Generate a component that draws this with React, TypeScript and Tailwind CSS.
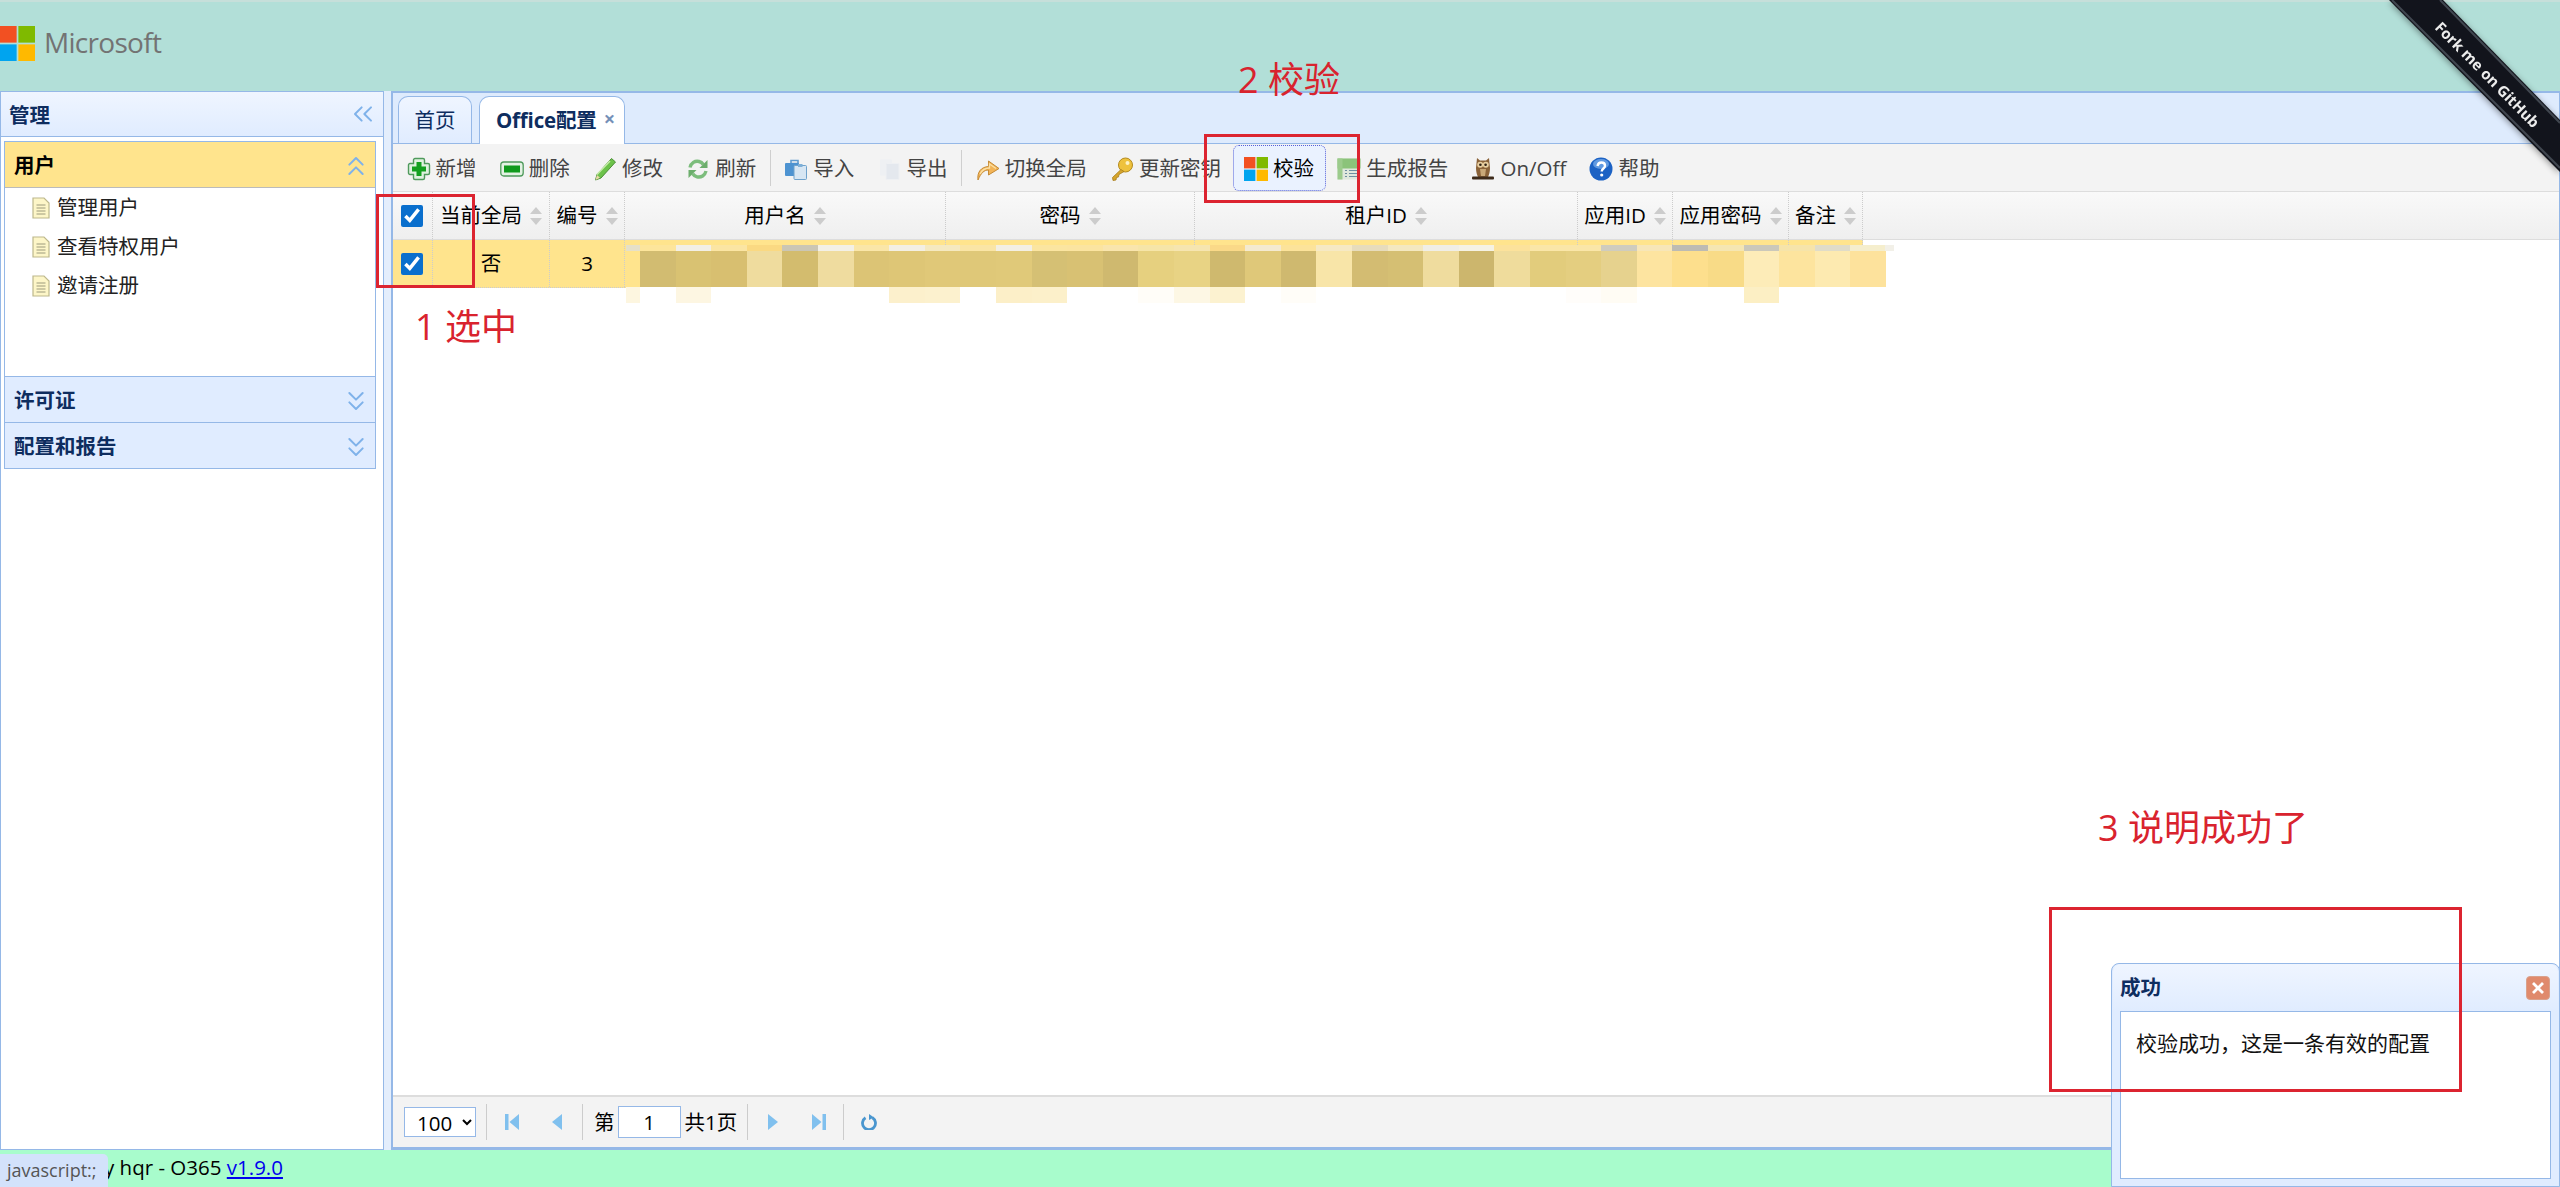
import { ChevronsDown, ChevronsLeft, ChevronsUp } from "lucide-react";
import type { ReactNode } from "react";

const NewIcon = () => (
  <svg viewBox="0 0 24 24" className="w-6 h-6">
    <path d="M8 1.500h8a1.500 1.500 0 0 1 1.500 1.500v3.500H21A1.500 1.500 0 0 1 22.500 8v8a1.500 1.500 0 0 1-1.500 1.500h-3.500V21a1.500 1.500 0 0 1-1.500 1.500H8A1.500 1.500 0 0 1 6.500 21v-3.500H3A1.500 1.500 0 0 1 1.500 16V8A1.500 1.500 0 0 1 3 6.500h3.500V3A1.500 1.500 0 0 1 8 1.500z" fill="#dff2df" stroke="#4f9a5c" strokeWidth="1.400" />
    <path d="M9.500 5h5v4.500H19v5h-4.500V19h-5v-4.500H5v-5h4.500z" fill="#13a01f" />
  </svg>
);

const RemoveIcon = () => (
  <svg viewBox="0 0 24 24" className="w-6 h-6">
    <rect x="0.800" y="5" width="22.400" height="14" rx="3" fill="#e3f2e3" stroke="#4f9a5c" strokeWidth="1.300" />
    <rect x="4" y="8.500" width="16" height="7" fill="#0f9a1c" />
  </svg>
);

const EditIcon = () => (
  <svg viewBox="0 0 24 24" className="w-6 h-6">
    <path d="M18.500 1.500l4 3.500L8 21l-5.500 2L4 17.500z" fill="#6cc24a" stroke="#4b8f37" strokeWidth="1" />
    <path d="M4 17.500L17 4" stroke="#c5eba8" strokeWidth="1.500" />
    <path d="M2.500 23L4 18l3 2.800z" fill="#e8d8a8" />
  </svg>
);

const RefreshIcon = () => (
  <svg viewBox="0 0 24 24" className="w-6 h-6" fill="none">
    <path d="M4 10.500C5 6 9 3.500 13 4.500c2 .5 3.300 1.500 4.300 3" stroke="#7cbd7c" strokeWidth="3.400" />
    <path d="M21.500 3v8h-8z" fill="#6cae6c" />
    <path d="M20 14c-1 4.500-5 6.800-9 5.800-2-.5-3.300-1.500-4.300-3" stroke="#7cbd7c" strokeWidth="3.400" />
    <path d="M2.500 21v-8h8z" fill="#6cae6c" />
  </svg>
);

const ImportIcon = () => (
  <svg viewBox="0 0 24 24" className="w-6 h-6">
    <path d="M7 3.500h7v3H7z" fill="none" stroke="#5f9bd0" strokeWidth="1.600" />
    <rect x="1" y="6" width="14" height="13" rx="1" fill="#4d93d1" />
    <rect x="10" y="8.500" width="12.500" height="14" rx="1" fill="#d7e6f3" stroke="#6fa2cc" />
    <rect x="14" y="7" width="4.500" height="3" fill="#7fb0d8" />
  </svg>
);

const ExportIcon = () => (
  <svg viewBox="0 0 24 24" className="w-6 h-6">
    <rect x="2" y="2.500" width="12" height="16" rx="1" fill="#eef0f3" />
    <rect x="8" y="6.500" width="13" height="16" rx="1" fill="#e4e8ee" stroke="#eef0f3" />
  </svg>
);

const SwitchIcon = () => (
  <svg viewBox="0 0 24 24" className="w-6 h-6">
    <path d="M2 23c-1-8 3-13 10.500-13.500V4L23 11.500 12.500 18v-5C8 13 5 16 2 23z" fill="#f3b457" stroke="#c48a35" strokeWidth="1" />
    <path d="M4 17c2-4 5-6 9.500-6V7l6.500 4.500" fill="none" stroke="#fbe0a4" strokeWidth="1.300" />
  </svg>
);

const KeyIcon = () => (
  <svg viewBox="0 0 24 24" className="w-6 h-6">
    <circle cx="15.500" cy="8" r="7" fill="#eec23d" stroke="#b48a1e" />
    <circle cx="17.500" cy="6" r="2" fill="#fdf3c4" />
    <path d="M11 12.500L2.500 20.500l.5 3 3-.5.500-2.500 2-.5.500-2.500 5-3z" fill="#d6a52c" stroke="#a87e1c" strokeWidth="0.800" />
  </svg>
);

const MsIcon = ({ size = "w-6 h-6" }: { size?: string }) => (
  <svg viewBox="0 0 24 24" className={size}>
    <rect width="11.400" height="11.400" fill="#f25022" />
    <rect x="12.600" width="11.400" height="11.400" fill="#7fba00" />
    <rect y="12.600" width="11.400" height="11.400" fill="#00a4ef" />
    <rect x="12.600" y="12.600" width="11.400" height="11.400" fill="#ffb900" />
  </svg>
);

const ReportIcon = () => (
  <svg viewBox="0 0 24 24" className="w-6 h-6">
    <rect x="0.500" y="1.500" width="23" height="21" fill="#dfe8dc" />
    <rect x="0.500" y="1.500" width="23" height="10" fill="#8bc37a" />
    <rect x="0.500" y="1.500" width="5" height="21" fill="#9ccb8c" />
    <path d="M8 13.500h2m2 0h9M8 16.500h2m2 0h9M8 19.500h2m2 0h9" stroke="#6d8fa0" strokeWidth="1.200" />
  </svg>
);

const OwlIcon = () => (
  <svg viewBox="0 0 24 24" className="w-6 h-6">
    <path d="M6 1l3 2.500h6L18 1l1 10c0 4-1 7-2 9H7c-1-2-2-5-2-9z" fill="#8a6238" />
    <circle cx="9.200" cy="7.800" r="3" fill="#e8cfa0" />
    <circle cx="14.800" cy="7.800" r="3" fill="#e8cfa0" />
    <circle cx="9.400" cy="7.800" r="1.300" fill="#2e2014" />
    <circle cx="14.600" cy="7.800" r="1.300" fill="#2e2014" />
    <path d="M9 12h6l-1 7h-4z" fill="#c9a878" />
    <rect x="1" y="19.500" width="22" height="3" rx="1" fill="#3d2a1a" />
  </svg>
);

const HelpIcon = () => (
  <svg viewBox="0 0 24 24" className="w-6 h-6">
    <circle cx="12" cy="12" r="11.500" fill="#1c62c4" />
    <ellipse cx="12" cy="7" rx="8" ry="5" fill="#7fb2ee" opacity="0.700" />
    <path d="M8.500 9c.5-2.500 2-3.500 3.800-3.500 2.200 0 3.700 1.300 3.700 3.200 0 2.800-3.300 2.800-3.300 5.800" fill="none" stroke="#fff" strokeWidth="2.400" />
    <circle cx="12.700" cy="18" r="1.600" fill="#fff" />
  </svg>
);

const FileIcon = () => (
  <svg viewBox="0 0 18 22" className="w-[18px] h-[22px] shrink-0">
    <path d="M1 1h11l5 5v15H1z" fill="#fdf6c8" stroke="#bdb88c" strokeWidth="1.200" />
    <path d="M4.500 8h9M4.500 11h9M4.500 14h9M4.500 17h9" stroke="#9c9a7c" strokeWidth="1" />
  </svg>
);

const SortIcon = () => (
  <svg viewBox="0 0 12 18" className="w-3 h-[18px] shrink-0" fill="#cccccc">
    <path d="M6 0l6 7H0z" />
    <path d="M6 18l6-7H0z" />
  </svg>
);

const Sep = () => <span className="w-px h-9 bg-[#cfcfcf] mx-[2px] shrink-0" />;

const PagerSep = () => <span className="w-px h-9 bg-[#cccccc] shrink-0" />;

const Tool = ({ icon, label, active }: { icon: ReactNode; label: string; active?: boolean }) => (
  <button
    className={`flex items-center gap-[5px] pt-[2px] h-[46px] shrink-0 rounded-[6px] text-[#444444] ${
      active ? "bg-[#eaf2ff] border border-dotted border-[#5560d8] text-black px-[10.600px]" : "px-[11.600px]"
    }`}
  >
    {icon}
    {label}
  </button>
);

const columns = [
  { label: "当前全局", width: "w-[117px]", value: "否" },
  { label: "编号", width: "w-[75px]", value: "3" },
  { label: "用户名", width: "w-[321px]", value: "" },
  { label: "密码", width: "w-[249px]", value: "" },
  { label: "租户ID", width: "w-[383px]", value: "" },
  { label: "应用ID", width: "w-[95px]", value: "" },
  { label: "应用密码", width: "w-[116px]", value: "" },
  { label: "备注", width: "w-[74px]", value: "" },
];

// 打码区域的色块: [中间, 上方, 下方], 从左到右
const mosaic: [string, string, string][] = [
  ["#d2bc71", "#fde59b", "#ffffff"],
  ["#d9c272", "#f2efe6", "#fdf6e2"],
  ["#d8bf70", "#fbe5a3", "#ffffff"],
  ["#efdc9e", "#fad982", "#ffffff"],
  ["#d3bc6e", "#cbc6b4", "#ffffff"],
  ["#efdc9f", "#f3f0e6", "#ffffff"],
  ["#dcc475", "#fae6a8", "#ffffff"],
  ["#dec676", "#f3efe3", "#fcf0cc"],
  ["#e0c878", "#f5e9c0", "#fcf1ce"],
  ["#dfc878", "#fae5a5", "#ffffff"],
  ["#e0c979", "#f3efe3", "#fcefc8"],
  ["#d5c074", "#fbe5a0", "#fcf0ca"],
  ["#d8c173", "#fbe4a0", "#ffffff"],
  ["#cfb96f", "#f9e5ad", "#ffffff"],
  ["#e6d07f", "#f6e5a8", "#fffdf8"],
  ["#e8d384", "#f6e5b0", "#fdf7e4"],
  ["#cfb96e", "#fad988", "#fcf2d0"],
  ["#dfc879", "#f4ead0", "#ffffff"],
  ["#cfb96f", "#fce39a", "#fffdf8"],
  ["#f8e5a8", "#f6e9c4", "#ffffff"],
  ["#d3bc72", "#e7dcbc", "#ffffff"],
  ["#d5bf73", "#f4e8c0", "#ffffff"],
  ["#efdc9e", "#f0eee6", "#ffffff"],
  ["#ccb66d", "#f5f2e4", "#ffffff"],
  ["#efdc9c", "#fce29b", "#ffffff"],
  ["#e2cc7c", "#fae6a8", "#ffffff"],
  ["#e4ce80", "#fae6a8", "#fffdfa"],
  ["#e6d28e", "#cfccbe", "#fffcf4"],
  ["#fde4a0", "#f7e6b8", "#ffffff"],
  ["#fddf8d", "#bdbbb3", "#ffffff"],
  ["#f8db87", "#f5e6b2", "#ffffff"],
  ["#fdecb8", "#cbc8ba", "#fcefc4"],
  ["#fde49e", "#f6e4aa", "#ffffff"],
  ["#fdeab0", "#e0dcc8", "#ffffff"],
  ["#fde29c", "#f5eecd", "#ffffff"],
];

const Mosaic = () => (
  <svg viewBox="0 0 1268 58" className="absolute left-[233px] top-[5px] w-[1268px] h-[58px]" shapeRendering="crispEdges">
    <rect x="0" y="0" width="14" height="6" fill="#e6e0c8" />
    <rect x="0" y="42" width="14" height="16" fill="#fdf6e0" />
    {mosaic.map(([main, top, bottom], i) => (
      <g key={i}>
        <rect x={14 + i * 35.6} y="0" width="36" height="6" fill={top} />
        <rect x={14 + i * 35.6} y="6" width="36" height="36" fill={main} />
        <rect x={14 + i * 35.6} y="42" width="36" height="16" fill={bottom} />
      </g>
    ))}
    <rect x="1259" y="0" width="9" height="6" fill="#f2f0e8" />
  </svg>
);

const Annotation = ({ className, children }: { className: string; children: ReactNode }) => (
  <span className={`absolute text-[36px] leading-none text-[#d9232e] whitespace-nowrap ${className}`}>{children}</span>
);

const Ribbon = () => (
  <svg viewBox="0 0 171 172" className="absolute top-0 right-0 w-[171px] h-[172px] drop-shadow-[0_2px_3px_rgba(0,0,0,0.4)]">
    <path d="M0 0h54l117 120v52z" fill="#12141c" />
    <path d="M3 0l168 168M51 0l120 123" stroke="#40464f" strokeWidth="2" fill="none" />
    <text x="98" y="80" textAnchor="middle" transform="rotate(45.500 98 75)" fill="#ececec" fontSize="15" fontWeight="700">
      Fork me on GitHub
    </text>
  </svg>
);

export default function App() {
  return (
    <div className="relative w-[2560px] h-[1187px] overflow-hidden flex flex-col bg-white text-black text-[20.500px] font-['Open_Sans','Noto_Sans_CJK_SC',sans-serif]">
      <header className="h-[91px] shrink-0 bg-[#b2dfd8] border-t-2 border-[#c6dfda] flex items-center gap-[9px] pb-[6px]">
        <div className="w-[35px] h-[35px] overflow-hidden">
          <MsIcon size="w-[35px] h-[35px]" />
        </div>
        <span className="text-[28px] font-medium tracking-[-0.7px] text-[#737373] -mt-[3px]">Microsoft</span>
      </header>

      <div className="flex-1 flex min-h-0 bg-[#e4eefc]">
        <aside className="w-[384px] shrink-0 bg-white border border-[#95b8e7] flex flex-col">
          <div className="h-[45px] shrink-0 pl-2 pt-[3px] flex items-center justify-between bg-linear-to-b from-[#eff5ff] to-[#e0ecff] border-b border-[#95b8e7]">
            <span className="font-bold text-[#0e2d5f]">管理</span>
            <ChevronsLeft className="w-8 h-8 text-[#7fb2ea] mr-[4px] -mt-[4px]" strokeWidth={1.5} />
          </div>
          <div className="mt-1 mx-[3px] w-[372px] border border-[#95b8e7] flex flex-col">
            <div className="h-[46px] pl-[9px] pt-[2px] flex items-center justify-between bg-[#ffe48d] border-b border-[#bbbbbb]">
              <span className="font-bold">用户</span>
              <ChevronsUp className="w-8 h-8 text-[#7fb2ea] mr-[3px]" strokeWidth={1.5} />
            </div>
            <ul className="h-[188px] pl-[27px] flex flex-col bg-white">
              {["管理用户", "查看特权用户", "邀请注册"].map((item) => (
                <li key={item} className="h-[39px] flex items-center gap-[7px] text-[#222222]">
                  <FileIcon />
                  {item}
                </li>
              ))}
            </ul>
            {["许可证", "配置和报告"].map((item) => (
              <div key={item} className="h-[46px] pl-[9px] pt-[2px] flex items-center justify-between bg-[#e0ecff] border-t border-[#95b8e7]">
                <span className="font-bold text-[#0e2d5f]">{item}</span>
                <ChevronsDown className="w-8 h-8 text-[#7fb2ea] mr-[3px]" strokeWidth={1.5} />
              </div>
            ))}
          </div>
        </aside>

        <main className="ml-[7px] flex-1 min-w-0 flex flex-col border-2 border-r border-[#95b8e7] border-t-2 bg-white">
          <div className="h-[51px] shrink-0 pl-[5px] pt-[3px] flex items-end gap-[7px] bg-[#deebfd] border-b border-[#95b8e7]">
            <div className="w-[74px] h-[47px] flex items-center justify-center rounded-t-[10px] border border-b-0 border-[#95b8e7] bg-linear-to-b from-[#eff5ff] to-[#e0ecff] text-[#0e2d5f]">
              首页
            </div>
            <div className="relative -mb-px w-[146px] h-[48px] pl-4 flex items-center rounded-t-[10px] border border-b-0 border-[#95b8e7] bg-white text-[#0e2d5f] font-bold tracking-[-0.2px]">
              Office配置
              <span className="absolute right-[9px] top-[10px] text-[20px] leading-6 font-bold text-[#7590b8]">×</span>
            </div>
          </div>

          <div className="h-[48px] shrink-0 pl-[2px] flex items-center bg-[#f3f3f3] border-b border-[#dddddd]">
            <Tool icon={<NewIcon />} label="新增" />
            <Tool icon={<RemoveIcon />} label="删除" />
            <Tool icon={<EditIcon />} label="修改" />
            <Tool icon={<RefreshIcon />} label="刷新" />
            <Sep />
            <Tool icon={<ImportIcon />} label="导入" />
            <Tool icon={<ExportIcon />} label="导出" />
            <Sep />
            <Tool icon={<SwitchIcon />} label="切换全局" />
            <Tool icon={<KeyIcon />} label="更新密钥" />
            <Tool icon={<MsIcon />} label="校验" active />
            <Tool icon={<ReportIcon />} label="生成报告" />
            <Tool icon={<OwlIcon />} label="On/Off" />
            <Tool icon={<HelpIcon />} label="帮助" />
          </div>

          <div className="flex-1 min-h-0 flex flex-col">
            <div className="h-[48px] shrink-0 flex bg-linear-to-b from-[#f9f9f9] to-[#efefef] border-b border-[#dddddd]">
              <div className="w-[40px] shrink-0 flex items-center justify-center border-r border-dotted border-[#cccccc] pr-[2px]">
                <input type="checkbox" defaultChecked className="w-[22px] h-[22px] accent-[#0a6fcd]" />
              </div>
              {columns.map((col) => (
                <div key={col.label} className={`${col.width} shrink-0 flex items-center justify-center gap-2 border-r border-dotted border-[#cccccc] whitespace-nowrap`}>
                  {col.label}
                  <SortIcon />
                </div>
              ))}
            </div>
            <div className="relative h-[48px] shrink-0 flex w-[1470px] bg-[#ffe48d] border-b border-dotted border-[#cccccc]">
              <div className="w-[40px] shrink-0 flex items-center justify-center border-r border-dotted border-[#cccccc] pr-[2px]">
                <input type="checkbox" defaultChecked className="w-[22px] h-[22px] accent-[#0a6fcd]" />
              </div>
              {columns.map((col) => (
                <div key={col.label} className={`${col.width} shrink-0 flex items-center justify-center border-r border-dotted border-[#cccccc]`}>
                  {col.value}
                </div>
              ))}
              <Mosaic />
            </div>
          </div>

          <div className="h-[53px] shrink-0 flex items-center pl-[11px] bg-[#f3f3f3] border-t-2 border-[#dddddd] border-b border-b-[#95b8e7]">
            <select defaultValue="100" className="w-[72px] h-[30px] pl-2 bg-white border border-[#95b8e7]">
              <option value="100">100</option>
            </select>
            <span className="w-[10px]" />
            <PagerSep />
            <svg viewBox="0 0 14 16" className="w-[14px] h-4 ml-[18px]" fill="#80c0ee">
              <path d="M0 0h3.500v16H0zM14 0v16L4.500 8z" />
            </svg>
            <svg viewBox="0 0 10 16" className="w-[10px] h-4 ml-[33px]" fill="#80c0ee">
              <path d="M10 0v16L0 8z" />
            </svg>
            <span className="w-[20px]" />
            <PagerSep />
            <span className="ml-[11px]">第</span>
            <input defaultValue="1" className="ml-[3px] w-[63px] h-[32px] text-center bg-white border border-[#95b8e7]" />
            <span className="ml-[4px]">共1页</span>
            <span className="w-[10px]" />
            <PagerSep />
            <svg viewBox="0 0 10 16" className="w-[10px] h-4 ml-[20px]" fill="#80c0ee">
              <path d="M0 0v16L10 8z" />
            </svg>
            <svg viewBox="0 0 14 16" className="w-[14px] h-4 ml-[34px]" fill="#80c0ee">
              <path d="M0 0v16l9.500-8zM10.500 0H14v16h-3.500z" />
            </svg>
            <span className="w-[17px]" />
            <PagerSep />
            <svg viewBox="0 0 16 16" className="w-4 h-4 ml-[17px]" fill="none">
              <path d="M4.500 3.700A6.500 6.500 0 1 0 11.500 3.700" stroke="#4a96cf" strokeWidth="2.800" />
              <path d="M8 0l5 3.500L8 6z" fill="#4a96cf" />
            </svg>
          </div>
        </main>
      </div>

      <footer className="h-[37px] shrink-0 bg-[#a8fccc] flex items-center pl-[104px] pb-[2px]">
        y hqr - O365&nbsp;
        <a href="#" className="text-[#0000ee] underline">
          v1.9.0
        </a>
      </footer>

      {/* 链接悬停提示 */}
      <div className="absolute left-0 bottom-0 w-[108px] h-[33px] pl-[7px] flex items-center bg-[#d3e2fb] rounded-tr-[5px] text-[18px] text-[#555555]">
        javascript:;
      </div>

      <Ribbon />

      <div className="absolute left-[2111px] top-[963px] w-[449px] h-[224px] px-[8px] rounded-t-[8px] border border-[#95b8e7] bg-[#e0ecff] flex flex-col">
        <div className="h-[47px] shrink-0 -mx-[7px] px-[7px] rounded-t-[8px] flex items-center justify-between bg-linear-to-b from-[#eff5ff] to-[#e0ecff]">
          <span className="font-bold text-[#0e2d5f]">成功</span>
          <span className="w-6 h-6 mr-[1px] rounded-[4px] flex items-center justify-center bg-[#e08a6c] border border-[#d9a18c]">
            <svg viewBox="0 0 12 12" className="w-3 h-3" stroke="#ffffff" strokeWidth="2.800">
              <path d="M1 1l10 10M11 1L1 11" />
            </svg>
          </span>
        </div>
        <div className="h-[168px] px-[15px] pt-[15px] bg-white border border-[#95b8e7] text-[21px] leading-[32px] text-[#111111]">
          {"校验成功\uFF0C这是一条有效的配置"}
        </div>
      </div>

      {/* 红色标注 */}
      <div className="absolute left-[376px] top-[194px] w-[99px] h-[94px] border-[3px] border-[#dc2430]" />
      <div className="absolute left-[1204px] top-[134px] w-[156px] h-[69px] border-[3px] border-[#dc2430]" />
      <div className="absolute left-[2049px] top-[907px] w-[413px] h-[185px] border-[3px] border-[#dc2430]" />
      <Annotation className="left-[415px] top-[309px]">1 选中</Annotation>
      <Annotation className="left-[1238px] top-[62px]">2 校验</Annotation>
      <Annotation className="left-[2098px] top-[810px]">3 说明成功了</Annotation>
    </div>
  );
}
